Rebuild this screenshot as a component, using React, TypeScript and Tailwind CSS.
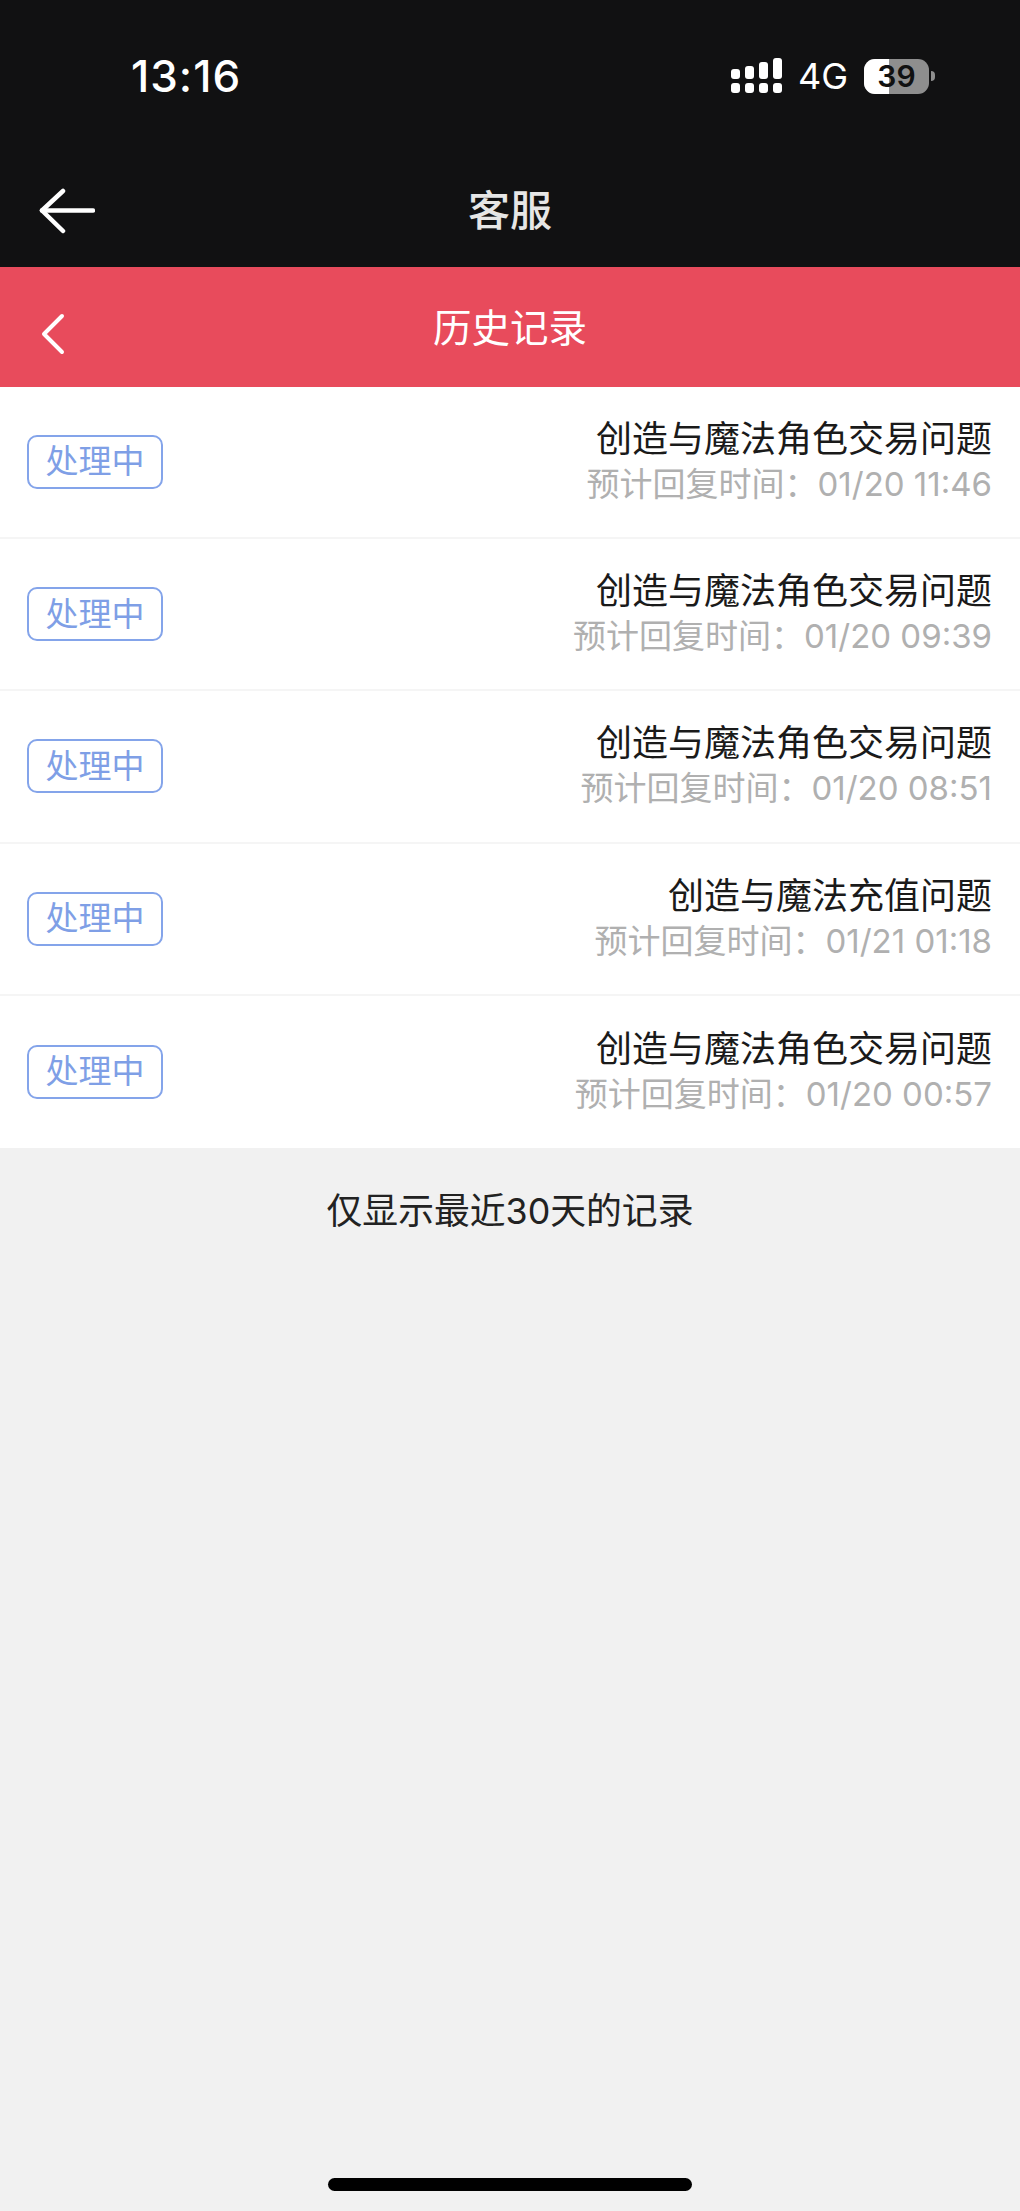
const rows = [
  { title: '创造与魔法角色交易问题', time: '01/20 11:46' },
  { title: '创造与魔法角色交易问题', time: '01/20 09:39' },
  { title: '创造与魔法角色交易问题', time: '01/20 08:51' },
  { title: '创造与魔法充值问题', time: '01/21 01:18' },
  { title: '创造与魔法角色交易问题', time: '01/20 00:57' },
];

const font = "font-['Inter','Noto_Sans_CJK_SC',sans-serif]";

const Signal = () => (
  <svg width="51" height="36" viewBox="0 0 51 36" fill="white">
    <rect x="0" y="11" width="9" height="10" rx="3" />
    <rect x="14" y="8" width="9" height="13" rx="3" />
    <rect x="28" y="4" width="9" height="17" rx="3" />
    <rect x="42" y="0" width="9" height="21" rx="3" />
    <rect x="0" y="25" width="9" height="10" rx="3" />
    <rect x="14" y="25" width="9" height="10" rx="3" />
    <rect x="28" y="25" width="9" height="10" rx="3" />
    <rect x="42" y="25" width="9" height="10" rx="3" />
  </svg>
);

const App = () => {
  return (
    <div className={`flex h-[2211px] w-[1020px] flex-col bg-[#f1f1f1] ${font}`}>
      <div className="h-[267px] bg-[#111112] text-white">
        <div className="flex h-[152px] items-start justify-between pl-[131px] pr-[85px] pt-[50px]">
          <span className="text-[44px] font-medium leading-[52px] tracking-[1px]">13:16</span>
          <div className="mt-[6px] flex items-center">
            <Signal />
            <span className="ml-[16px] text-[36px] leading-[40px]">4G</span>
            <div className="relative ml-[16px] flex h-[35px] w-[65px] items-center justify-center overflow-hidden rounded-[11px] bg-[#8e8e8e]">
              <div className="absolute inset-y-0 left-0 w-[25px] bg-white" />
              <span className="relative text-[30px] font-semibold leading-none text-[#111]">39</span>
            </div>
            <div className="ml-[2px] h-[10px] w-[4px] rounded-r-full bg-[#8e8e8e]" />
          </div>
        </div>
        <div className="relative flex h-[115px] items-center justify-center">
          <svg className="absolute left-[39px] top-[36px]" width="56" height="46" viewBox="0 0 56 46" fill="none" stroke="white" strokeWidth="4.5" strokeLinecap="round" strokeLinejoin="round">
            <path d="M54 22.5H3" />
            <path d="M24 3 3 22.5 24 43" />
          </svg>
          <span className="mt-[2px] text-[42px] font-medium text-[#e6e6e6]">客服</span>
        </div>
      </div>
      <div className="relative flex h-[120px] items-center justify-center bg-[#e84b5c] text-white">
        <svg className="absolute left-[40px] top-[46px]" width="26" height="42" viewBox="0 0 26 42" fill="none" stroke="white" strokeWidth="4" strokeLinecap="round" strokeLinejoin="round">
          <path d="M22 3 4 21 22 39" />
        </svg>
        <span className="mt-[3px] text-[38.5px]">历史记录</span>
      </div>
      <div className="bg-white">
        {rows.map((r, i) => (
          <div key={i} className="flex h-[152.2px] items-center justify-between border-b-2 border-[#f5f5f5] pl-[27px] pr-[28px] last:border-b-0">
            <span className="flex h-[54px] w-[136px] items-center justify-center rounded-[10px] border-[2.5px] border-[#84a4ea] text-[33px] text-[#7f9fe6]">处理中</span>
            <div className="mb-[2px] text-right">
              <div className="text-[36px] leading-[46px] text-[#1a1a1a]">{r.title}</div>
              <div className="text-[33px] leading-[44px] text-[#b0b0b0]">预计回复时间：{r.time}</div>
            </div>
          </div>
        ))}
      </div>
      <div className="pt-[39px] text-center text-[35.8px] leading-[48px] text-[#222]">仅显示最近30天的记录</div>
      <div className="mt-auto mb-[20px] h-[13px] w-[364px] self-center rounded-full bg-black" />
    </div>
  );
};

export default App;
